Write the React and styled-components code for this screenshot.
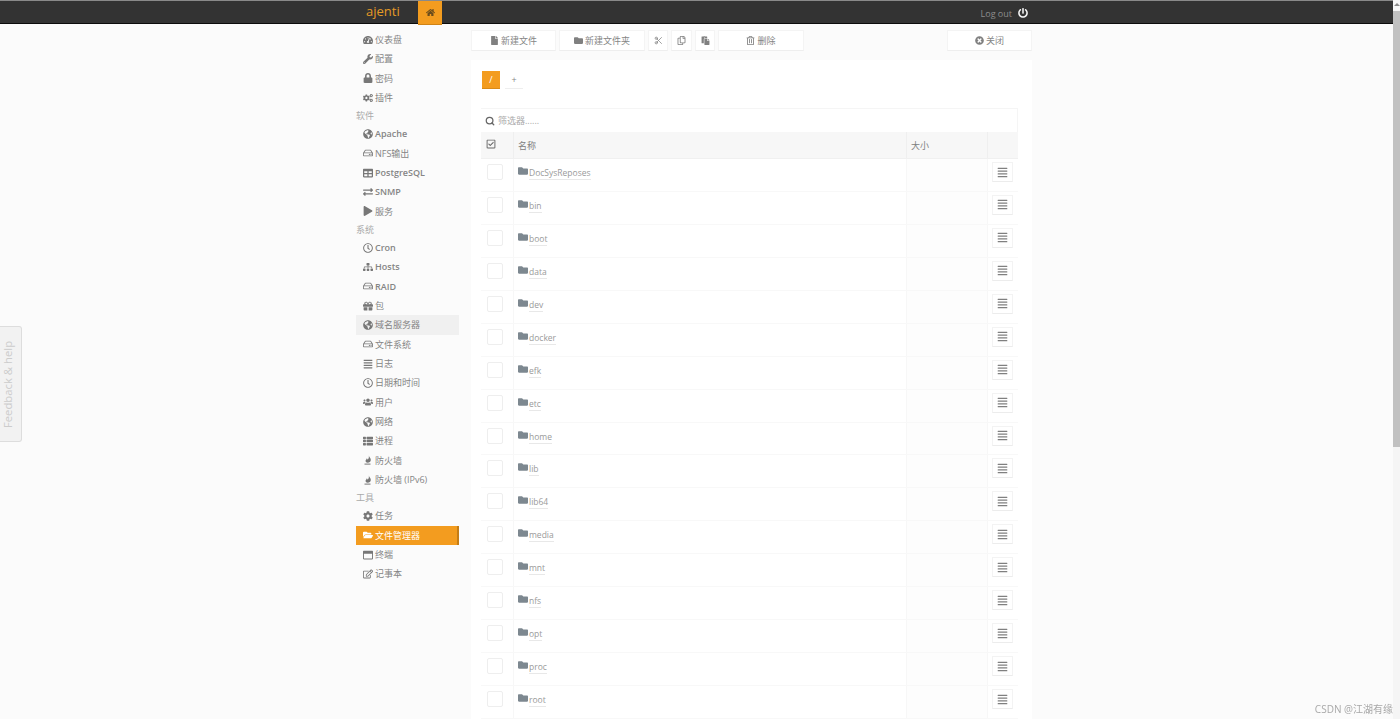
import React from "react";
import styled, { createGlobalStyle } from "styled-components";
import {
  FaHome, FaTachometerAlt, FaWrench, FaLock, FaCogs, FaGlobeAmericas, FaRegHdd, FaTable,
  FaExchangeAlt, FaPlay, FaRegClock, FaSitemap, FaGift, FaAlignJustify, FaUsers, FaThList,
  FaCog, FaFolderOpen, FaRegWindowMaximize, FaRegEdit, FaFile, FaFolder,
  FaRegCopy, FaPaste, FaRegTrashAlt, FaTimesCircle, FaRegCheckSquare, FaPowerOff,
} from "react-icons/fa";
import { FiScissors, FiSearch } from "react-icons/fi";

const FONT = `"Open Sans", "Noto Sans CJK SC", sans-serif`;

const GlobalStyle = createGlobalStyle`
  html, body {
    margin: 0;
    height: 100%;
    overflow: hidden;
  }
  body {
    font-family: ${FONT};
    font-size: 9px;
    color: #808080;
    background: #fbfbfb;
  }
`;

const Scroller = styled.div`
  height: 100vh;
  overflow: hidden;
  background: #fbfbfb;
`;

const TopBar = styled.header`
  height: 22px;
  background: #333;
  border-top: 1px solid #8a8a8a;
  border-bottom: 1px solid #0c0c0c;
`;

const TopInner = styled.div`
  width: 676px;
  margin-left: 356px;
  height: 22px;
  display: flex;
  align-items: flex-start;
`;

const Logo = styled.div`
  margin-left: 10px;
  width: 52px;
  color: #e79b25;
  font-size: 13px;
  font-weight: 500;
  line-height: 21px;
`;

const HomeButton = styled.div`
  width: 24px;
  height: 23px;
  background: #f39c1f;
  border-bottom: 1px solid #d08315;
  display: flex;
  align-items: center;
  justify-content: center;
  color: #6a4c1c;
  font-size: 9px;
`;

const LogOut = styled.div`
  margin-left: auto;
  margin-right: 4px;
  display: flex;
  align-items: center;
  gap: 6px;
  height: 24px;
  color: #8d8d8d;
  font-size: 9px;

  svg {
    color: #f4f4f4;
    font-size: 10px;
  }
`;

const Layout = styled.div`
  width: 676px;
  margin-left: 356px;
  display: grid;
  grid-template-columns: 103px 561px;
  column-gap: 12px;
`;

const Sidebar = styled.nav`
  padding-top: 6px;
`;

const SectionTitle = styled.div`
  height: 17px;
  line-height: 18px;
  color: #aaa;
  font-size: 9px;
`;

const NavItem = styled.div`
  height: 19.33px;
  display: flex;
  align-items: center;
  padding-left: 7px;
  gap: 2px;
  font-weight: ${({ $strong }) => ($strong ? 600 : 400)};
  white-space: nowrap;
  color: ${({ $active }) => ($active ? "#fff" : "#858585")};
  background: ${({ $active, $hover }) =>
    $active ? "#f39c1f" : $hover ? "#f0f0f0" : "transparent"};
  box-shadow: ${({ $active }) => ($active ? "inset -2px 0 0 #c47d16" : "none")};

  svg {
    width: 10px;
    height: 10px;
    flex: none;
    color: ${({ $active }) => ($active ? "#fff" : "#777")};
  }
`;

const Toolbar = styled.div`
  display: flex;
  gap: 3px;
  padding-top: 6px;
  margin-bottom: 9px;
`;

const ToolButton = styled.div`
  width: ${({ $w }) => $w}px;
  height: 21px;
  margin-left: ${({ $push }) => ($push ? "auto" : "0")};
  box-sizing: border-box;
  background: #fff;
  border: 1px solid #f4f4f4;
  border-bottom-color: #eeeeee;
  display: flex;
  align-items: center;
  justify-content: center;
  gap: 2px;
  color: #858585;
  font-size: 9px;

  svg {
    width: 9px;
    height: 9px;
    color: #808080;
  }
`;

const Panel = styled.main`
  background: #fff;
  padding: 11px 14px 0 10px;
`;

const Breadcrumbs = styled.div`
  display: flex;
  gap: 5px;
  height: 18px;
  margin: 0 0 19px 1px;
`;

const Crumb = styled.div`
  width: 18px;
  height: 18px;
  box-sizing: border-box;
  display: flex;
  align-items: center;
  justify-content: center;
  font-size: 9px;
  color: ${({ $active }) => ($active ? "#fff" : "#888")};
  background: ${({ $active }) => ($active ? "#f39c1f" : "#fff")};
  border-bottom: 1px solid ${({ $active }) => ($active ? "#d98a17" : "#eee")};
`;

const FilterRow = styled.div`
  height: 24px;
  box-sizing: border-box;
  border-top: 1px solid #f5f5f5;
  border-right: 1px solid #f5f5f5;
  display: flex;
  align-items: center;
  gap: 3px;
  padding-left: 4px;
  color: #aaa;
  font-size: 9px;

  svg {
    width: 10px;
    height: 10px;
    color: #666;
    stroke-width: 3;
  }
`;

const HeadRow = styled.div`
  display: grid;
  grid-template-columns: 32px 393px 81px 31px;
  height: 27px;
  background: #f7f7f7;
  border-bottom: 1px solid #f0f0f0;
  box-sizing: border-box;
`;

const HeadCell = styled.div`
  border-left: ${({ $first }) => ($first ? "none" : "1px solid #efefef")};
  padding: 7px 0 0 ${({ $first }) => ($first ? 5 : 4)}px;
  line-height: 13px;
  color: #808080;

  svg {
    width: 10px;
    height: 10px;
    color: #666;
  }
`;

const Row = styled.div`
  display: grid;
  grid-template-columns: 32px 393px 81px 31px;
  height: 32.94px;
  box-sizing: border-box;
  border-bottom: 1px solid #f8f8f8;
`;

const Cell = styled.div`
  border-left: ${({ $first }) => ($first ? "none" : "1px solid #f7f7f7")};
  padding-top: ${({ $pad }) => $pad || 0}px;
  background: ${({ $tint }) => ($tint ? "#fdfdfd" : "transparent")};
`;

const CheckBox = styled.div`
  width: 16px;
  height: 16px;
  margin-left: 6px;
  box-sizing: border-box;
  background: #fff;
  border: 1px solid #eeeeee;
  border-radius: 2px;
`;

const NameLink = styled.div`
  display: flex;
  align-items: flex-start;
  gap: 1px;
  padding-left: 4px;

  svg {
    width: 10px;
    height: 10px;
    margin-top: 1px;
    color: #7d8890;
    flex: none;
  }
`;

const FileName = styled.span`
  margin-top: 2px;
  line-height: 12px;
  color: #9a9a9a;
  font-size: 8.5px;
  border-bottom: 1px solid #e8e8e8;
`;

const MenuButton = styled.div`
  width: 21px;
  height: 20px;
  margin-left: 4px;
  box-sizing: border-box;
  background: #fff;
  border: 1px solid #f3f3f3;
  border-bottom-color: #ececec;
  display: flex;
  align-items: center;
  justify-content: center;
  color: #808080;

  svg {
    width: 11px;
    height: 11px;
  }
`;

const FeedbackTab = styled.div`
  position: fixed;
  left: 0;
  top: 326px;
  height: 114px;
  width: 15px;
  background: #f2f2f2;
  border: 1px solid #ddd;
  border-left: none;
  border-radius: 0 3px 3px 0;
  display: flex;
  align-items: center;
  justify-content: center;
  padding-right: 6px;
`;

const FeedbackText = styled.span`
  transform: rotate(-90deg);
  white-space: nowrap;
  color: #cccccc;
  font-size: 11.3px;
`;

const ScrollTrack = styled.div`
  position: fixed;
  top: 0;
  right: 0;
  bottom: 0;
  width: 7px;
  background: #f5f5f5;
`;

const ScrollArrow = styled.div`
  width: 0;
  height: 0;
  margin: 3px auto 5px;
  border-left: 3px solid transparent;
  border-right: 3px solid transparent;
  border-bottom: 3px solid #8a8a8a;
`;

const ScrollThumb = styled.div`
  height: 436px;
  background: #c1c1c1;
`;

const Watermark = styled.div`
  position: fixed;
  right: 7px;
  bottom: 3px;
  color: #a8a8a8;
  font-size: 10px;
`;

// flame over a base line, the firewall entries in the sidebar
const FirewallIcon = () => (
  <svg viewBox="0 0 10 10" fill="currentColor">
    <path d="M5.8 0.4C6.2 2.2 8 3 7.8 5C7.7 6.7 6.4 7.8 4.6 7.8C3.2 7.8 2.4 6.9 2.6 5.6C2.8 4.6 3.6 4.2 3.8 3.2C4.4 3.6 4.6 4.2 4.6 4.8C5.6 3.8 6.2 2.2 5.8 0.4Z" />
    <rect x="1.5" y="8.6" width="6" height="1" />
  </svg>
);

const nav = [
  { icon: FaTachometerAlt, label: "仪表盘" },
  { icon: FaWrench, label: "配置" },
  { icon: FaLock, label: "密码" },
  { icon: FaCogs, label: "插件" },
  { title: "软件" },
  { icon: FaGlobeAmericas, label: "Apache", strong: true },
  { icon: FaRegHdd, label: "NFS输出" },
  { icon: FaTable, label: "PostgreSQL", strong: true },
  { icon: FaExchangeAlt, label: "SNMP", strong: true },
  { icon: FaPlay, label: "服务" },
  { title: "系统" },
  { icon: FaRegClock, label: "Cron", strong: true },
  { icon: FaSitemap, label: "Hosts", strong: true },
  { icon: FaRegHdd, label: "RAID", strong: true },
  { icon: FaGift, label: "包" },
  { icon: FaGlobeAmericas, label: "域名服务器", hover: true },
  { icon: FaRegHdd, label: "文件系统" },
  { icon: FaAlignJustify, label: "日志" },
  { icon: FaRegClock, label: "日期和时间" },
  { icon: FaUsers, label: "用户" },
  { icon: FaGlobeAmericas, label: "网络" },
  { icon: FaThList, label: "进程" },
  { icon: FirewallIcon, label: "防火墙" },
  { icon: FirewallIcon, label: "防火墙 (IPv6)" },
  { title: "工具" },
  { icon: FaCog, label: "任务" },
  { icon: FaFolderOpen, label: "文件管理器", active: true },
  { icon: FaRegWindowMaximize, label: "终端" },
  { icon: FaRegEdit, label: "记事本" },
];

const folders = [
  "DocSysReposes", "bin", "boot", "data", "dev", "docker", "efk", "etc", "home", "lib",
  "lib64", "media", "mnt", "nfs", "opt", "proc", "root",
];

const App = () => (
  <>
    <GlobalStyle />
    <Scroller>
      <TopBar>
        <TopInner>
          <Logo>ajenti</Logo>
          <HomeButton>
            <FaHome />
          </HomeButton>
          <LogOut>
            Log out
            <FaPowerOff />
          </LogOut>
        </TopInner>
      </TopBar>

      <Layout>
        <Sidebar>
          {nav.map((item, i) =>
            item.title ? (
              <SectionTitle key={i}>{item.title}</SectionTitle>
            ) : (
              <NavItem key={i} $active={item.active} $hover={item.hover} $strong={item.strong}>
                <item.icon />
                {item.label}
              </NavItem>
            )
          )}
        </Sidebar>

        <div>
          <Toolbar>
            <ToolButton $w={85}><FaFile />新建文件</ToolButton>
            <ToolButton $w={86}><FaFolder />新建文件夹</ToolButton>
            <ToolButton $w={20}><FiScissors /></ToolButton>
            <ToolButton $w={21}><FaRegCopy /></ToolButton>
            <ToolButton $w={20}><FaPaste /></ToolButton>
            <ToolButton $w={86}><FaRegTrashAlt />删除</ToolButton>
            <ToolButton $w={85} $push><FaTimesCircle />关闭</ToolButton>
          </Toolbar>

          <Panel>
            <Breadcrumbs>
              <Crumb $active>/</Crumb>
              <Crumb>+</Crumb>
            </Breadcrumbs>

            <FilterRow>
              <FiSearch />
              筛选器......
            </FilterRow>

            <HeadRow>
              <HeadCell $first><FaRegCheckSquare /></HeadCell>
              <HeadCell>名称</HeadCell>
              <HeadCell>大小</HeadCell>
              <HeadCell />
            </HeadRow>

            {folders.map((name) => (
              <Row key={name}>
                <Cell $first $pad={5}><CheckBox /></Cell>
                <Cell $pad={6}>
                  <NameLink>
                    <FaFolder />
                    <FileName>{name}</FileName>
                  </NameLink>
                </Cell>
                <Cell $tint />
                <Cell $pad={3}>
                  <MenuButton><FaAlignJustify /></MenuButton>
                </Cell>
              </Row>
            ))}
          </Panel>
        </div>
      </Layout>

      <FeedbackTab>
        <FeedbackText>Feedback &amp; help</FeedbackText>
      </FeedbackTab>
      <Watermark>CSDN @江湖有缘</Watermark>
      <ScrollTrack>
        <ScrollArrow />
        <ScrollThumb />
      </ScrollTrack>
    </Scroller>
  </>
);

export default App;
